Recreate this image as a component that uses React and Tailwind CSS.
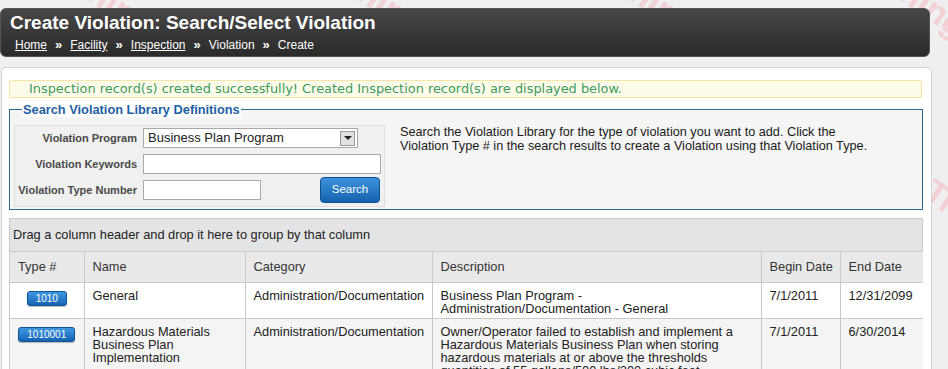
import React from 'react'

const rows = [
  {
    type: '1010',
    name: 'General',
    category: 'Administration/Documentation',
    desc: 'Business Plan Program - Administration/Documentation - General',
    begin: '7/1/2011',
    end: '12/31/2099',
  },
  {
    type: '1010001',
    name: 'Hazardous Materials Business Plan Implementation',
    category: 'Administration/Documentation',
    desc: 'Owner/Operator failed to establish and implement a Hazardous Materials Business Plan when storing hazardous materials at or above the thresholds quantities of 55 gallons/500 lbs/200 cubic feet.',
    begin: '7/1/2011',
    end: '6/30/2014',
  },
]

const cols = [
  { label: 'Type #', w: 'w-[74px]' },
  { label: 'Name', w: 'w-[161px]' },
  { label: 'Category', w: 'w-[187px]' },
  { label: 'Description', w: 'w-[329px]' },
  { label: 'Begin Date', w: 'w-[79px]' },
  { label: 'End Date', w: 'w-[83px]' },
]

// faint watermark pieces peeking out behind the panels
const marks = [
  'left-[30px] top-[-34px]',
  'left-[300px] top-[-34px]',
  'left-[572px] top-[-34px]',
  'left-[842px] top-[-34px]',
  'left-[916px] top-[200px]',
]

const Crumb = ({ children, link }) => (
  <span className={link ? 'underline' : ''}>{children}</span>
)

const Sep = () => <span className='font-bold text-[13px] leading-[12px] px-[8px]'>»</span>

const TypeButton = ({ label }) => (
  <div className='inline-block px-[8px] h-[15px] leading-[14px] text-[10px] text-white rounded-[3px] border border-[#0f5496] bg-gradient-to-b from-[#3f97e0] to-[#1664b4] shadow-[0_1px_1px_rgba(0,0,0,0.25)]'>
    {label}
  </div>
)

const Label = ({ children }) => (
  <div className='w-[128px] pr-[6px] text-right text-[11px] font-bold text-[#4a4a4a] whitespace-nowrap'>{children}</div>
)

const App = () => {
  return (
    <div className='relative w-[948px] h-[369px] overflow-hidden bg-[#efefef] font-["Liberation_Sans",Arial,sans-serif] text-[#222]'>
      {marks.map((m, i) => (
        <div
          key={i}
          className={`absolute ${m} rotate-[35deg] text-[34px] font-bold text-[#f4c3ca] opacity-70 select-none`}
        >
          Training
        </div>
      ))}

      <div className='relative pt-[8px]'>
        {/* header bar */}
        <div className='w-[930px] h-[49px] rounded-[6px] border border-[#555] bg-gradient-to-b from-[#464646] to-[#2b2b2b] px-[9px] pt-[2px] text-white'>
          <div className='text-[19px] font-bold leading-[24px]'>Create Violation: Search/Select Violation</div>
          <div className='text-[12px] leading-[21px] pl-[5px]'>
            <Crumb link>Home</Crumb>
            <Sep />
            <Crumb link>Facility</Crumb>
            <Sep />
            <Crumb link>Inspection</Crumb>
            <Sep />
            <Crumb>Violation</Crumb>
            <Sep />
            <Crumb>Create</Crumb>
          </div>
        </div>

        {/* white content panel */}
        <div className='ml-[1px] mt-[10px] w-[931px] h-[320px] bg-white border border-[#d3d3d3] rounded-t-[5px] pl-[7px] pt-[12px]'>
          <div className='w-[913px] h-[18px] bg-[#fdfce9] border border-[#f3e6a6] rounded-[2px] pl-[19px] text-[12.9px] leading-[16px] text-[#3d9a62] font-["DejaVu_Sans",Verdana,sans-serif]'>
            Inspection record(s) created successfully! Created Inspection record(s) are displayed below.
          </div>

          <fieldset className='mt-[4px] w-[914px] border border-[#2e6a8c] bg-[#f5f5f5] px-[4px] pt-[8px] pb-[2px]'>
            <legend className='ml-[8px] px-[1px] text-[12.8px] font-bold text-[#1f60a3] leading-[15px] bg-white'>
              Search Violation Library Definitions
            </legend>
            <div className='flex gap-[15px]'>
              <div className='w-[371px] h-[82px] bg-[#f0f0f0] border border-[#dedede] flex flex-col pt-[2px]'>
                <div className='flex items-center h-[20px]'>
                  <Label>Violation Program</Label>
                  <div className='w-[215px] h-[20px] bg-white border border-[#a9a9a9] flex items-center justify-between pl-[4px] pr-[2px]'>
                    <span className='text-[13px] leading-[16px]'>Business Plan Program</span>
                    <span className='w-[15px] h-[15px] bg-[#e1e1e1] border border-[#9a9a9a] flex items-center justify-center'>
                      <span className='w-0 h-0 border-l-[4px] border-r-[4px] border-t-[4px] border-l-transparent border-r-transparent border-t-[#222]' />
                    </span>
                  </div>
                </div>
                <div className='flex items-center h-[20px] mt-[6px]'>
                  <Label>Violation Keywords</Label>
                  <div className='w-[238px] h-[20px] bg-white border border-[#a9a9a9]' />
                </div>
                <div className='flex items-center h-[26px] mt-[3px]'>
                  <Label>Violation Type Number</Label>
                  <div className='w-[118px] h-[20px] bg-white border border-[#a9a9a9]' />
                  <div className='ml-[59px] w-[60px] h-[26px] rounded-[4px] border border-[#0e4f8e] bg-gradient-to-b from-[#3d93dc] to-[#1462ae] text-white text-[11.5px] flex items-center justify-center'>
                    Search
                  </div>
                </div>
              </div>
              <div className='w-[482px] text-[12.7px] leading-[14px] text-[#1a1a1a]'>
                Search the Violation Library for the type of violation you want to add. Click the Violation Type # in the search results to create a Violation using that Violation Type.
              </div>
            </div>
          </fieldset>

          {/* grid */}
          <div className='mt-[8px] w-[914px] border border-[#c9c9c9] text-[12.8px]'>
            <div className='h-[33px] bg-[#e4e4e4] border-b border-[#c9c9c9] pl-[3px] flex items-center text-[#222]'>
              Drag a column header and drop it here to group by that column
            </div>
            <table className='table-fixed border-collapse w-[913px]'>
              <thead>
                <tr className='h-[30px] bg-[#e9e9e9] text-[#333]'>
                  {cols.map((c, i) => (
                    <th
                      key={c.label}
                      className={`${c.w} font-normal text-left px-[8px] whitespace-nowrap ${i > 0 ? 'border-l border-[#c9c9c9]' : ''}`}
                    >
                      {c.label}
                    </th>
                  ))}
                </tr>
              </thead>
              <tbody>
                {rows.map((r, idx) => (
                  <tr key={r.type} className={`${idx % 2 ? 'bg-[#f4f4f4]' : 'bg-white'} align-top border-t border-[#c9c9c9]`}>
                    <td className='text-center pt-[5px] h-[36px]'>
                      <TypeButton label={r.type} />
                    </td>
                    {[r.name, r.category, r.desc, r.begin, r.end].map((v, i) => (
                      <td key={i} className='border-l border-[#c9c9c9] px-[8px] pt-[6px] leading-[13px]'>
                        {v}
                      </td>
                    ))}
                  </tr>
                ))}
              </tbody>
            </table>
          </div>
        </div>
      </div>
    </div>
  )
}

export default App
